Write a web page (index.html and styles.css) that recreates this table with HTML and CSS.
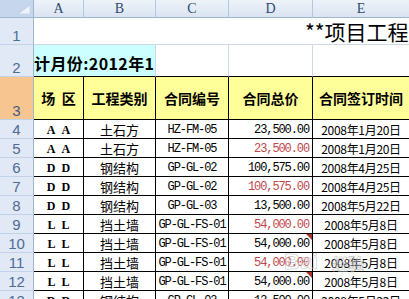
FILE: index.html
```html
<!DOCTYPE html>
<html lang="zh-CN">
<head>
<meta charset="utf-8">
<title>项目工程合同统计表</title>
<link rel="stylesheet" href="styles.css">
</head>
<body>
<div class="sheet">
  <div class="corner"><svg width="12" height="9" viewBox="0 0 12 9"><polygon points="12,0 12,9 0,9" fill="#eef3f9" stroke="#b7c8de" stroke-width="0.6"/></svg></div>
  <div class="colhead">A</div>
  <div class="colhead">B</div>
  <div class="colhead">C</div>
  <div class="colhead">D</div>
  <div class="colhead">E</div>

  <div class="rowhead">1</div>
  <div class="title"><span>**项目工程合同统计表</span></div>

  <div class="rowhead">2</div>
  <div class="period">计月份:2012年1</div>
  <div class="blank2"></div>
  <div class="blank2"></div>
  <div class="blank2"></div>

  <div class="rowhead sel">3</div>
  <div class="td th">场&nbsp;&nbsp;区</div>
  <div class="td th">工程类别</div>
  <div class="td th">合同编号</div>
  <div class="td th">合同总价</div>
  <div class="td th">合同签订时间</div>

  <div class="rowhead">4</div>
  <div class="td zone">A&nbsp;&nbsp;A</div>
  <div class="td kind">土石方</div>
  <div class="td code">HZ-FM-05</div>
  <div class="td num">23,500.00</div>
  <div class="td date">2008年1月20日</div>

  <div class="rowhead">5</div>
  <div class="td zone">A&nbsp;&nbsp;A</div>
  <div class="td kind">土石方</div>
  <div class="td code">HZ-FM-05</div>
  <div class="td num red">23,500.00</div>
  <div class="td date">2008年1月20日</div>

  <div class="rowhead">6</div>
  <div class="td zone">D&nbsp;&nbsp;D</div>
  <div class="td kind">钢结构</div>
  <div class="td code">GP-GL-02</div>
  <div class="td num">100,575.00</div>
  <div class="td date">2008年4月25日</div>

  <div class="rowhead">7</div>
  <div class="td zone">D&nbsp;&nbsp;D</div>
  <div class="td kind">钢结构</div>
  <div class="td code">GP-GL-02</div>
  <div class="td num red">100,575.00</div>
  <div class="td date">2008年4月25日</div>

  <div class="rowhead">8</div>
  <div class="td zone">D&nbsp;&nbsp;D</div>
  <div class="td kind">钢结构</div>
  <div class="td code">GP-GL-03</div>
  <div class="td num">13,500.00</div>
  <div class="td date">2008年5月22日</div>

  <div class="rowhead">9</div>
  <div class="td zone">L&nbsp;&nbsp;L</div>
  <div class="td kind">挡土墙</div>
  <div class="td code">GP-GL-FS-01</div>
  <div class="td num red">54,000.00</div>
  <div class="td date">2008年5月8日</div>

  <div class="rowhead">10</div>
  <div class="td zone">L&nbsp;&nbsp;L</div>
  <div class="td kind">挡土墙</div>
  <div class="td code">GP-GL-FS-01</div>
  <div class="td num note">54,000.00<span class="flag"></span></div>
  <div class="td date">2008年5月8日</div>

  <div class="rowhead">11</div>
  <div class="td zone">L&nbsp;&nbsp;L</div>
  <div class="td kind">挡土墙</div>
  <div class="td code">GP-GL-FS-01</div>
  <div class="td num red">54,000.00</div>
  <div class="td date">2008年5月8日</div>

  <div class="rowhead">12</div>
  <div class="td zone">L&nbsp;&nbsp;L</div>
  <div class="td kind">挡土墙</div>
  <div class="td code">GP-GL-FS-01</div>
  <div class="td num note">54,000.00<span class="flag"></span></div>
  <div class="td date">2008年5月8日</div>

  <div class="rowhead">13</div>
  <div class="td zone">D&nbsp;&nbsp;D</div>
  <div class="td kind">钢结构</div>
  <div class="td code">GP-GL-03</div>
  <div class="td num">13,500.00</div>
  <div class="td date">2008年5月22日</div>
</div>
<div class="watermark"><span class="wm-big">Bai</span><span class="wm-cn">经验</span></div>
</body>
</html>
```

FILE: styles.css
```css
html, body {
  margin: 0;
  padding: 0;
  overflow: hidden;
  background: #ffffff;
}

body {
  width: 409px;
  height: 299px;
  position: relative;
}

.sheet {
  display: grid;
  grid-template-columns: 34px 50px 72px 73px 84px 97px;
  grid-template-rows: 18px 27px 32px 43px repeat(10, 19px);
  width: 410px;
}

.sheet > div {
  box-sizing: border-box;
  display: flex;
  align-items: flex-end;
  justify-content: center;
  overflow: hidden;
  white-space: nowrap;
}

.corner {
  background: #c6d7ed;
  border-right: 1px solid #9eb6ce;
  border-bottom: 1px solid #9eb6ce;
  justify-content: flex-end !important;
  padding: 0 3px 3px 0;
}

.corner svg {
  display: block;
}

.colhead {
  background: linear-gradient(#eef3fa, #dae4f1);
  border-right: 1px solid #b4c7de;
  border-bottom: 1px solid #9eb6ce;
  font-family: "Liberation Serif", serif;
  font-size: 14px;
  line-height: 16px;
  color: #2f4b70;
  align-items: center !important;
}

.rowhead {
  background: #e0e9f5;
  border-right: 1px solid #9eb6ce;
  border-bottom: 1px solid #c3d2e6;
  font-family: "Liberation Sans", sans-serif;
  font-size: 15px;
  line-height: 17px;
  color: #4e6b95;
}

.rowhead.sel {
  background: #f7c690;
  color: #3f5a80;
}

.title {
  grid-column: 2 / 7;
  border-bottom: 1px solid #d0d7e5;
  justify-content: flex-start !important;
  align-items: center !important;
  padding-left: 271px;
  font-family: "Noto Sans CJK SC", sans-serif;
  font-size: 21px;
  line-height: 26px;
  color: #000;
}

.period {
  grid-column: 2 / 4;
  background: #ccffff;
  border-right: 1px solid #d0d7e5;
  border-bottom: 1px solid #000;
  justify-content: flex-start !important;
  padding-bottom: 3px;
  font-family: "Noto Sans CJK SC", sans-serif;
  font-weight: bold;
  font-size: 16px;
  line-height: 20px;
  letter-spacing: 0.4px;
  color: #000;
}

.blank2 {
  border-right: 1px solid #d0d7e5;
  border-bottom: 1px solid #000;
}

.td {
  border-right: 1px solid #000;
  border-bottom: 1px solid #000;
  color: #000;
  position: relative;
}

.th {
  background: #ffff99;
  align-items: center !important;
  font-family: "Noto Sans CJK SC", sans-serif;
  font-weight: bold;
  font-size: 14px;
  line-height: 18px;
}

.zone {
  font-family: "Liberation Serif", serif;
  font-weight: bold;
  font-size: 12px;
  line-height: 16px;
}

.kind {
  font-family: "Noto Sans CJK SC", sans-serif;
  font-size: 13px;
  line-height: 17px;
}

.code {
  font-family: "Liberation Mono", monospace;
  font-size: 12px;
  line-height: 16px;
  letter-spacing: -1.1px;
}

.num {
  justify-content: flex-end !important;
  padding-right: 3px;
  font-family: "Liberation Mono", monospace;
  font-size: 12px;
  line-height: 16px;
  letter-spacing: -1.1px;
}

.red {
  color: #c0474c !important;
}

.date {
  font-family: "Noto Sans CJK SC", sans-serif;
  font-size: 12px;
  line-height: 17px;
  letter-spacing: -0.3px;
}

.flag {
  position: absolute;
  top: 0;
  right: 0;
  width: 0;
  height: 0;
  border-top: 6px solid #a8322f;
  border-left: 6px solid transparent;
}

.watermark {
  position: absolute;
  left: 284px;
  top: 250px;
  display: flex;
  align-items: flex-end;
  gap: 14px;
  pointer-events: none;
}

.wm-big {
  font-family: "Liberation Sans", sans-serif;
  font-weight: bold;
  font-size: 22px;
  line-height: 24px;
  color: rgba(255, 255, 255, 0.45);
  -webkit-text-stroke: 0.6px rgba(110, 110, 110, 0.45);
}

.wm-cn {
  font-family: "Noto Sans CJK SC", sans-serif;
  font-weight: bold;
  font-size: 16px;
  line-height: 22px;
  color: rgba(255, 255, 255, 0.45);
  -webkit-text-stroke: 0.6px rgba(110, 110, 110, 0.45);
}
```
